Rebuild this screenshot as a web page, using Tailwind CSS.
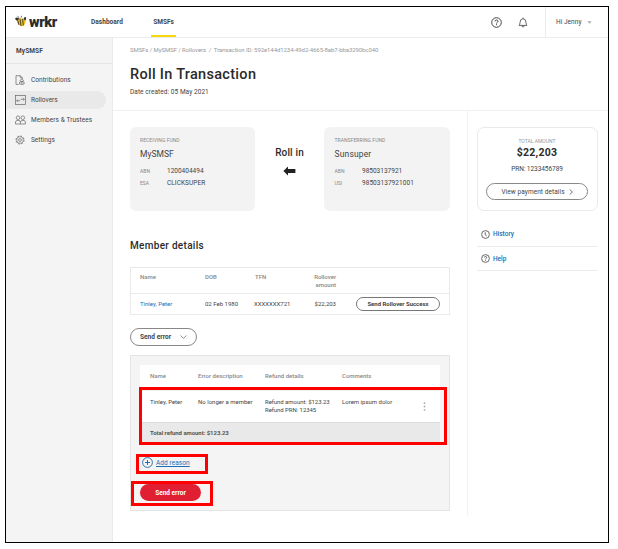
<!DOCTYPE html>
<html lang="en">
<head>
<meta charset="utf-8">
<title>Roll In Transaction</title>
<script src="https://cdn.jsdelivr.net/npm/@tailwindcss/browser@4"></script>
</head>
<body class="bg-white font-[Roboto,sans-serif] text-[#444]">
<div class="relative h-[549px] w-[618px] overflow-hidden pt-[6px] pl-[5px]">
<div class="flex h-[537px] w-[604px] flex-col border border-black text-[6.5px] leading-[8px] whitespace-nowrap">

  <header class="flex h-[31px] shrink-0 items-stretch border-b-[1.5px] border-[#ececec]">
    <div class="flex w-[85px] items-center pl-[9px]">
      <svg class="-mt-[3px]" width="12" height="12" viewBox="0 0 12 12">
        <path d="M4 2.8 2.6.9M6.2 2.6 6.6.8" stroke="#333" stroke-width=".7" fill="none"/>
        <ellipse cx="2.6" cy="4.3" rx="2.5" ry="1.5" fill="#333" transform="rotate(25 2.6 4.3)"/>
        <ellipse cx="9.8" cy="4" rx="1.2" ry="2" fill="#333" transform="rotate(20 9.8 4)"/>
        <path d="M3 4.8 5.6 3.2 8.8 4 10.6 6.6 9.6 9.6 7 11.4 3.6 9.8 1.8 7.2z" fill="#f3bf14"/>
        <path d="M5 3.6 6 11M7.6 3.8 8.3 10.6M2.9 5.6 3.9 9.8" stroke="#2b2b2b" stroke-width=".8"/>
      </svg>
      <span class="mt-[1px] ml-[2px] text-[14.5px] leading-[18px] font-black tracking-[-0.4px] text-[#2b2b2b]">wrkr</span>
    </div>
    <nav class="flex flex-1 font-bold">
      <div class="flex w-[60px] items-center"><span class="tracking-[0.05px]">Dashboard</span></div>
      <div class="flex w-[25px] items-center justify-center border-b-2 border-[#f5d90a] pt-[2px]">SMSFs</div>
    </nav>
    <div class="flex w-[54px] items-center gap-[16px]">
      <svg width="11" height="11" viewBox="0 0 11 11" fill="none" stroke="#333" stroke-width=".9"><circle cx="5.5" cy="5.5" r="4.8"/><path d="M4 4.4Q4 3 5.5 3T7 4.3Q7 5 6.2 5.4T5.5 6.5M5.5 7.2V8.2"/></svg>
      <svg width="10" height="11" viewBox="0 0 10 11" fill="none" stroke="#444" stroke-width=".8"><path d="M1 8.4Q2 7.6 2 5.5 2 2 5 1.7 8 2 8 5.5 8 7.6 9 8.4zM5 .5V1.7M3.8 8.6Q4 10 5 10T6.2 8.6"/></svg>
    </div>
    <div class="flex w-[63px] items-center border-l border-[#ececec] pl-[10px] pr-[16px]">
      <span class="tracking-[0.05px]">Hi Jenny</span>
      <svg class="ml-auto" width="5" height="3" viewBox="0 0 5 3"><path d="M.4.3H4.6L2.5 2.7z" fill="#aaa"/></svg>
    </div>
  </header>

  <div class="flex min-h-0 flex-1">
    <aside class="w-[107px] shrink-0 border-r border-[#ebebeb] bg-[#f4f4f4]">
      <div class="flex h-[26px] items-center border-b border-[#e4e4e4] pl-[10px] font-bold tracking-[0.1px]">MySMSF</div>
      <div class="pt-[6px]">
        <div class="flex h-[20px] items-center pl-[9px]">
          <svg width="10" height="10" viewBox="0 0 10 10" fill="none" stroke="#666" stroke-width=".7"><path d="M3.7 9.4H1V.7H5.3L7.4 2.8V4M5.3.7V2.8H7.4"/><ellipse cx="6.8" cy="5.6" rx="1.7" ry="1"/><path d="M4.5 7.2Q6.8 5.9 9.1 7.2V9Q6.8 10 4.5 9zM6.8 7V9"/></svg>
          <span class="ml-[6px] tracking-[0.05px]">Contributions</span></div>
        <div class="my-[1px] flex h-[18px] w-[100px] items-center rounded-r-full bg-[#e9e9e9] pl-[9px]">
          <svg width="11" height="10" viewBox="0 0 11 10" fill="none" stroke="#666" stroke-width=".7"><rect x=".4" y=".4" width="10" height="9.2"/><path d="M1.6 5.7H5M2.7 4.7 1.6 5.7 2.7 6.7M5.7 4.3H9.3M8.2 3.3 9.3 4.3 8.2 5.3"/></svg>
          <span class="ml-[5px]">Rollovers</span></div>
        <div class="flex h-[20px] items-center pl-[9px]">
          <svg width="11" height="10" viewBox="0 0 11 10" fill="none" stroke="#666" stroke-width=".7"><circle cx="3" cy="2.7" r="1.8"/><circle cx="7.8" cy="2.7" r="1.8"/><path d="M.5 9V7Q.5 5.4 3 5.4T5.4 7V9zM5.4 7Q5.6 5.4 8 5.4T10.4 7V9H5.4"/></svg>
          <span class="ml-[5px] tracking-[0.08px]">Members &amp; Trustees</span></div>
        <div class="flex h-[20px] items-center pl-[9px]">
          <svg width="11" height="10" viewBox="0 0 11 10" fill="none" stroke="#666"><circle cx="5" cy="5" r="4" stroke-width="1" stroke-dasharray="1.57 1.57"/><circle cx="5" cy="5" r="3.3" stroke-width=".6"/><circle cx="5" cy="5" r="1.4" stroke-width=".7"/></svg>
          <span class="ml-[5px]">Settings</span></div>
      </div>
    </aside>

    <div class="flex min-w-0 flex-1 flex-col">
      <div class="h-[73px] shrink-0 border-b-[1.5px] border-[#f0f0f0] pl-[17px] pt-[8px]">
        <div class="text-[6px] tracking-[-0.08px] text-[#999]">SMSFs / MySMSF / Rollovers &nbsp;/&nbsp; Transaction ID: 592e144d1234-49d2-4665-8ab7-bba3290bc040</div>
        <h1 class="mt-[12px] text-[14.5px] leading-[18px] font-medium tracking-[0.3px] text-[#2b2b2b]">Roll In Transaction</h1>
        <div class="mt-[4px] text-[6.5px] tracking-[0.06px]">Date created: 05 May 2021</div>
      </div>

      <div class="flex h-[405px]">
        <main class="w-[355px] shrink-0 border-r-[1.5px] border-[#f3f3f3] pl-[17px] pt-[16px]">
          <div class="flex h-[84px] w-[320px]">
            <section class="w-[125px] rounded-[6px] bg-[#f3f3f3] pl-[10px] pt-[9px]">
              <div class="text-[5px] tracking-[0.05px] text-[#888]">RECEIVING FUND</div>
              <div class="mt-[5px] text-[8.5px] leading-[10px]">MySMSF</div>
              <div class="mt-[8px] grid grid-cols-[27px_auto] gap-y-[4px]">
                <span class="text-[5px] text-[#888]">ABN</span><span>1200404494</span>
                <span class="text-[5px] text-[#888]">ESA</span><span class="tracking-[0.05px]">CLICKSUPER</span>
              </div>
            </section>
            <div class="flex w-[69px] flex-col items-center pt-[20px]">
              <div class="text-[10px] leading-[12px] font-medium tracking-[0.15px] text-[#2b2b2b]">Roll in</div>
              <svg class="mt-[7px]" width="13" height="10" viewBox="0 0 13 10"><path d="M.4 5 5 .4V3H12.4V7H5V9.6z" fill="#222"/></svg>
            </div>
            <section class="flex-1 rounded-[6px] bg-[#f3f3f3] pl-[10.5px] pt-[9px]">
              <div class="text-[5px] tracking-[0.05px] text-[#888]">TRANSFERRING FUND</div>
              <div class="mt-[5px] text-[8.5px] leading-[10px] tracking-[0.15px]">Sunsuper</div>
              <div class="mt-[8px] grid grid-cols-[27.5px_auto] gap-y-[4px]">
                <span class="text-[5px] text-[#888]">ABN</span><span>98503137921</span>
                <span class="text-[5px] text-[#888]">USI</span><span class="tracking-[0.05px]">98503137921001</span>
              </div>
            </section>
          </div>

          <h2 class="mt-[29px] text-[10px] leading-[12px] font-medium tracking-[0.3px] text-[#2b2b2b]">Member details</h2>

          <div class="mt-[15px] h-[48px] w-[320px] border border-[#e9e9e9] text-[6px]">
            <div class="grid h-[26px] grid-cols-[65px_50px_44px_37px] border-b border-[#e9e9e9] pl-[9px] pt-[5px] font-medium text-[#888]">
              <span>Name</span><span>DOB</span><span>TFN</span><span class="text-right">Rollover<br>amount</span>
            </div>
            <div class="grid h-[20px] grid-cols-[65px_49px_45px_37px_1fr] items-center pl-[9px] pr-[9px]">
              <span class="text-[#1b6db5]">Tinley, Peter</span><span>02 Feb 1980</span><span>XXXXXXX721</span><span class="text-right">$22,203</span>
              <button class="ml-auto h-[14px] w-[84px] rounded-full border border-[#777] font-bold leading-[10px] tracking-[-0.02px]">Send Rollover Success</button>
            </div>
          </div>

          <button class="mt-[13px] flex h-[18px] w-[67px] items-center rounded-full border border-[#888] pl-[9px] font-bold">
            <span class="tracking-[0.05px]">Send error</span>
            <svg class="ml-[9px]" width="7" height="4" viewBox="0 0 7 4" fill="none" stroke="#777" stroke-width=".8"><path d="M.5.5 3.5 3.3 6.5.5"/></svg>
          </button>

          <section class="mt-[9px] h-[156px] w-[320px] border border-[#e4e4e4] bg-[#f4f4f4] pl-[9px] pt-[9px] text-[6px]">
            <div class="w-[300px]">
              <div class="grid h-[26px] grid-cols-[48px_67px_77px_auto] items-center border-b border-[#eee] bg-white pl-[10px] pb-[4px] font-medium text-[#888]">
                <span>Name</span><span>Error description</span><span>Refund details</span><span>Comments</span>
              </div>
              <div class="grid h-[31px] grid-cols-[48px_67px_77px_81px_auto] bg-white pl-[10px] pt-[7px]">
                <span>Tinley, Peter</span><span>No longer a member</span><span class="leading-[7.5px] tracking-[-0.05px]">Refund amount: $123.23<br>Refund PRN: 12345</span><span>Lorem ipsum dolor</span>
                <svg class="mt-[4px]" width="3" height="9" viewBox="0 0 3 9" fill="#aaa"><circle cx="1.5" cy="1.2" r=".9"/><circle cx="1.5" cy="4.5" r=".9"/><circle cx="1.5" cy="7.8" r=".9"/></svg>
              </div>
              <div class="flex h-[21px] items-center border-t border-[#ddd] bg-[#e9e9e9] pl-[10px] font-bold tracking-[-0.05px] text-[#555]">Total refund amount: $123.23</div>
            </div>
            <div class="mt-[14px] flex items-center pl-[2px] text-[6.5px] text-[#1b6db5]">
              <svg width="11" height="11" viewBox="0 0 11 11" fill="none" stroke="#1b5fa5" stroke-width=".9"><circle cx="5.5" cy="5.5" r="4.9"/><path d="M5.5 3V8M3 5.5H8"/></svg>
              <span class="ml-[3px] tracking-[0.08px] underline">Add reason</span>
            </div>
            <button class="mt-[16px] block h-[17px] w-[61px] rounded-full bg-[#e01f33] text-[6.5px] font-bold text-white">Send error</button>
          </section>
        </main>

        <aside class="pl-[9px] pt-[16px]">
          <section class="-ml-[0.5px] flex h-[84px] w-[121px] flex-col items-center rounded-[7px] border border-[#eaeaea] pt-[9px]">
            <div class="text-[5px] text-[#999]">TOTAL AMOUNT</div>
            <div class="mt-[2px] text-[10.5px] leading-[12px] font-bold tracking-[0.25px] text-[#2b2b2b]">$22,203</div>
            <div class="mt-[6px] tracking-[-0.05px]">PRN: 1233456789</div>
            <button class="mt-[10px] flex h-[17px] w-[102px] items-center justify-center gap-[4px] rounded-full border border-[#888]">
              <span class="tracking-[0.08px]">View payment details</span>
              <svg width="4" height="6" viewBox="0 0 4 6" fill="none" stroke="#555" stroke-width=".8"><path d="M.6.4 3.4 3 .6 5.6"/></svg>
            </button>
          </section>
          <div class="mt-[11px] w-[121px] text-[#1b6db5]">
            <div class="flex h-[25px] items-center border-b border-[#ececec] pl-[3.5px]">
              <svg width="9" height="9" viewBox="0 0 9 9" fill="none" stroke="#444" stroke-width=".8"><circle cx="4.5" cy="4.5" r="3.9"/><path d="M4.2 2.2V4.8L5.7 6"/></svg>
              <span class="ml-[3.5px] font-medium">History</span></div>
            <div class="flex h-[24px] items-center border-b border-[#ececec] pl-[3.5px]">
              <svg width="9" height="9" viewBox="0 0 9 9" fill="none" stroke="#444" stroke-width=".8"><circle cx="4.5" cy="4.5" r="3.9"/><path d="M3.3 3.6Q3.3 2.5 4.5 2.5T5.7 3.6Q5.7 4.2 5 4.5T4.5 5.4M4.5 6V6.8"/></svg>
              <span class="ml-[3.5px] font-medium">Help</span></div>
          </div>
        </aside>
      </div>
    </div>
  </div>
</div>

<!-- callout outlines over the form -->
<div class="absolute top-[387px] left-[139px] h-[58px] w-[308px] border-3 border-[#f00]"></div>
<div class="absolute top-[454px] left-[136px] h-[20px] w-[72px] border-3 border-[#f00]"></div>
<div class="absolute top-[481px] left-[131px] h-[25px] w-[82px] border-3 border-[#f00]"></div>
</div>
</body>
</html>
